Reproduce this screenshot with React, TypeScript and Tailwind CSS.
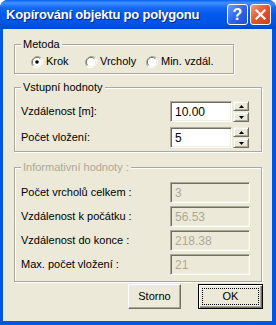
import React from "react";

function Radio({ checked }: { checked?: boolean }) {
  return (
    <svg width="12" height="12" viewBox="0 0 12 12" className="shrink-0">
      <path d="M10.2 1.8 A6 6 0 0 0 1.8 10.2" fill="none" stroke="#ACA899" strokeWidth="1" />
      <path d="M1.8 10.2 A6 6 0 0 0 10.2 1.8" fill="none" stroke="#FFFFFF" strokeWidth="1" />
      <circle cx="6" cy="6" r="4.6" fill="#FFFFFF" />
      <path d="M9.3 2.7 A4.6 4.6 0 0 0 2.7 9.3" fill="none" stroke="#716F64" strokeWidth="1" />
      <path d="M2.7 9.3 A4.6 4.6 0 0 0 9.3 2.7" fill="none" stroke="#F1EFE2" strokeWidth="1" />
      {checked && <circle cx="6" cy="6" r="1.8" fill="#000000" />}
    </svg>
  );
}

function Group({
  caption,
  disabled,
  className,
  children,
}: {
  caption: string;
  disabled?: boolean;
  className: string;
  children: React.ReactNode;
}) {
  return (
    <div
      className={`relative border border-[#ACA899] shadow-[inset_1px_1px_0_#fff,1px_1px_0_#fff] ${className}`}
    >
      <span
        className={`absolute left-[6px] top-[-8px] bg-[#ECE9D8] px-[2px] leading-[14px] ${
          disabled ? "text-[#ACA899]" : "text-black"
        }`}
      >
        {caption}
      </span>
      {children}
    </div>
  );
}

function Edit({
  value,
  disabled,
  width,
}: {
  value: string;
  disabled?: boolean;
  width: string;
}) {
  return (
    <div
      className={`${width} h-[21px] flex items-center pl-[4px] border border-t-[#ACA899] border-l-[#ACA899] border-b-white border-r-white shadow-[inset_1px_1px_0_#716F64,inset_-1px_-1px_0_#F1EFE2] text-[12px] ${
        disabled ? "bg-[#ECE9D8] text-[#ACA899]" : "bg-white text-black"
      }`}
    >
      {value}
    </div>
  );
}

function SpinHalf({ up, h }: { up?: boolean; h: string }) {
  return (
    <div
      className={`${h} w-full flex items-center justify-center bg-[#ECE9D8] border border-t-[#F1EFE2] border-l-[#F1EFE2] border-b-[#716F64] border-r-[#716F64] shadow-[inset_1px_1px_0_#fff,inset_-1px_-1px_0_#ACA899]`}
    >
      <svg width="5" height="3" viewBox="0 0 5 3">
        {up ? (
          <path d="M2.5 0 L5 3 L0 3 Z" fill="#000" />
        ) : (
          <path d="M0 0 L5 0 L2.5 3 Z" fill="#000" />
        )}
      </svg>
    </div>
  );
}

function Spin() {
  return (
    <div className="ml-[1px] w-[16px] h-[21px] flex flex-col">
      <SpinHalf up h="h-[10px]" />
      <div className="h-[1px]" />
      <SpinHalf h="h-[10px]" />
    </div>
  );
}

export default function App() {
  return (
    <div
      className="w-[276px] h-[325px] flex flex-col bg-[#0055E5] rounded-t-[8px] overflow-hidden text-[11px] text-black"
      style={{ fontFamily: '"Liberation Sans", Arial, sans-serif' }}
    >
      {/* Title bar */}
      <div className="h-[29px] shrink-0 flex items-center pl-[6px] pr-[5px] bg-[linear-gradient(to_bottom,#0A5FF0_0%,#3F93FF_10%,#1A6BF5_25%,#0058EE_50%,#0055E5_80%,#0047D0_100%)]">
        <span className="flex-1 text-white font-bold text-[13px] tracking-[-0.2px] [text-shadow:1px_1px_0_#0A1F83]">
          Kopírování objektu po polygonu
        </span>
        <div className="flex gap-[2px]">
          <div className="w-[21px] h-[21px] rounded-[3px] border border-white bg-[linear-gradient(135deg,#6C9BFF_0%,#2F66E8_50%,#1C4FD6_100%)] flex items-center justify-center text-white font-bold text-[16px] leading-none">
            ?
          </div>
          <div className="w-[21px] h-[21px] rounded-[3px] border border-white bg-[linear-gradient(135deg,#F0A080_0%,#E05A30_45%,#C7411A_100%)] flex items-center justify-center">
            <svg width="11" height="11" viewBox="0 0 11 11">
              <path d="M1.5 1.5 L9.5 9.5 M9.5 1.5 L1.5 9.5" stroke="#fff" strokeWidth="2.2" strokeLinecap="square" />
            </svg>
          </div>
        </div>
      </div>

      {/* Client area */}
      <div className="flex-1 ml-[3px] mr-[4px] mb-[4px] bg-[#ECE9D8] flex flex-col pl-[11px] pt-[15px]">
        <Group caption="Metoda" className="w-[220px] h-[30px]">
          <div className="flex items-center h-[13px] mt-[10px] pl-[16px]">
            <div className="w-[54px] flex items-center gap-[3px]">
              <Radio checked />
              <span>Krok</span>
            </div>
            <div className="w-[61px] flex items-center gap-[3px]">
              <Radio />
              <span>Vrcholy</span>
            </div>
            <div className="flex items-center gap-[3px]">
              <Radio />
              <span>Min. vzdál.</span>
            </div>
          </div>
        </Group>

        <Group caption="Vstupní hodnoty" className="mt-[13px] w-[248px] h-[65px]">
          <div className="flex flex-col gap-[5px] pt-[13px]">
            <div className="flex items-center h-[21px]">
              <span className="w-[155px] pl-[6px]">Vzdálenost [m]:</span>
              <Edit value="10.00" width="w-[62px]" />
              <Spin />
            </div>
            <div className="flex items-center h-[21px]">
              <span className="w-[155px] pl-[6px]">Počet vložení:</span>
              <Edit value="5" width="w-[62px]" />
              <Spin />
            </div>
          </div>
        </Group>

        <Group caption="Informativní hodnoty :" disabled className="mt-[15px] w-[248px] h-[115px]">
          <div className="flex flex-col gap-[3px] pt-[14px]">
            {[
              ["Počet vrcholů celkem :", "3"],
              ["Vzdálenost k počátku :", "56.53"],
              ["Vzdálenost do konce :", "218.38"],
              ["Max. počet vložení :", "21"],
            ].map(([l, v]) => (
              <div key={l} className="flex items-center h-[21px]">
                <span className="w-[155px] pl-[6px]">{l}</span>
                <Edit value={v} disabled width="w-[80px]" />
              </div>
            ))}
          </div>
        </Group>

        <div className="flex mt-[2px] ml-[114px] gap-[17px]">
          <div className="w-[53px] h-[25px] flex items-center justify-center bg-[#ECE9D8] border border-t-white border-l-white border-b-[#716F64] border-r-[#716F64] shadow-[inset_-1px_-1px_0_#ACA899]">
            Storno
          </div>
          <div className="w-[65px] h-[25px] flex bg-[#ECE9D8] border border-black shadow-[inset_1px_1px_0_#fff,inset_-1px_-1px_0_#716F64,inset_-2px_-2px_0_#ACA899]">
            <span className="flex-1 m-[3px] border border-dotted border-black flex items-center justify-center">
              OK
            </span>
          </div>
        </div>
      </div>
    </div>
  );
}
